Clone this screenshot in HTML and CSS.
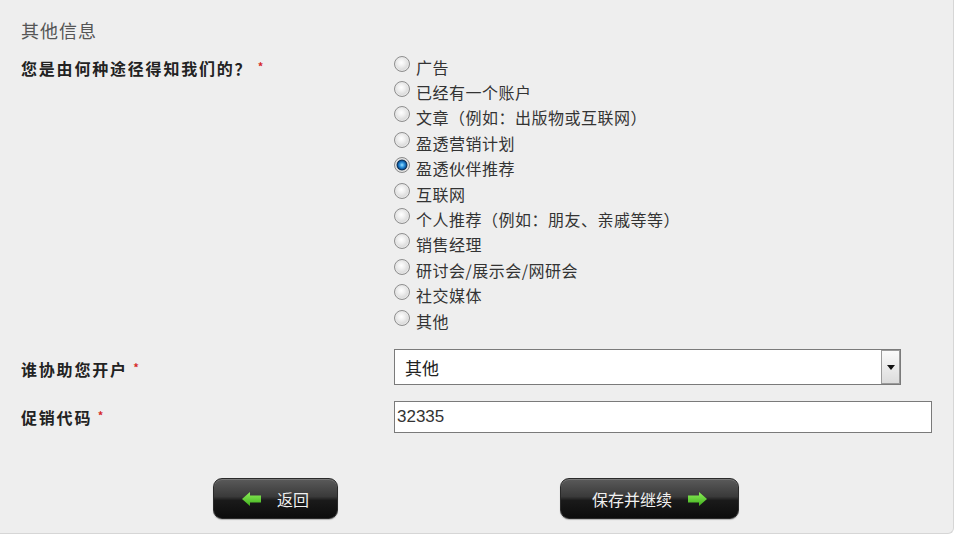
FILE: index.html
```html
<!DOCTYPE html>
<html lang="zh-CN">
<head>
    <meta charset="UTF-8">
    <meta name="viewport" content="width=device-width, initial-scale=1.0">
    <title>其他信息</title>
    <link rel="stylesheet" href="styles.css">
</head>
<body>

    <div class="panel">
        <h2 class="section-title">其他信息</h2>

        <div class="form-row">
            <div class="field-label">您是由何种途径得知我们的？ <span class="req">*</span></div>
            <div class="radio-list">
                <label class="radio"><input type="radio" name="source">广告</label>
                <label class="radio"><input type="radio" name="source">已经有一个账户</label>
                <label class="radio"><input type="radio" name="source">文章（例如：出版物或互联网）</label>
                <label class="radio"><input type="radio" name="source">盈透营销计划</label>
                <label class="radio"><input type="radio" name="source" checked>盈透伙伴推荐</label>
                <label class="radio"><input type="radio" name="source">互联网</label>
                <label class="radio"><input type="radio" name="source">个人推荐（例如：朋友、亲戚等等）</label>
                <label class="radio"><input type="radio" name="source">销售经理</label>
                <label class="radio"><input type="radio" name="source">研讨会/展示会/网研会</label>
                <label class="radio"><input type="radio" name="source">社交媒体</label>
                <label class="radio"><input type="radio" name="source">其他</label>
            </div>
        </div>

        <div class="form-row row-select">
            <div class="field-label">谁协助您开户 <span class="req">*</span></div>
            <div class="select-wrap">
                <select class="select">
                    <option>其他</option>
                </select>
                <span class="select-btn"><span class="caret"></span></span>
            </div>
        </div>

        <div class="form-row row-input">
            <div class="field-label">促销代码 <span class="req">*</span></div>
            <input class="text-input" type="text" value="32335">
        </div>

        <div class="actions">
            <button class="btn btn-back" type="button">
                <svg class="arrow" width="19" height="14" viewBox="0 0 19 14"><defs><linearGradient id="ga" x1="0" y1="0" x2="0" y2="1"><stop offset="0" stop-color="#8ef05a"/><stop offset="1" stop-color="#3fae1c"/></linearGradient></defs><polygon points="0,7 8,0 8,3.5 19,3.5 19,10.5 8,10.5 8,14" fill="url(#ga)"/></svg>
                <span>返回</span>
            </button>
            <button class="btn btn-next" type="button">
                <span>保存并继续</span>
                <svg class="arrow" width="19" height="14" viewBox="0 0 19 14"><defs><linearGradient id="gb" x1="0" y1="0" x2="0" y2="1"><stop offset="0" stop-color="#8ef05a"/><stop offset="1" stop-color="#3fae1c"/></linearGradient></defs><polygon points="19,7 11,0 11,3.5 0,3.5 0,10.5 11,10.5 11,14" fill="url(#gb)"/></svg>
            </button>
        </div>
    </div>

</body>
</html>
```

FILE: styles.css
```css
body { margin: 0; background: #fff; font-family: "Noto Sans CJK SC", "Liberation Sans", sans-serif; }
.panel { box-sizing: border-box; width: 954px; height: 534px; padding: 18px 0 0 21px; background: #eeeeee; border-right: 1px solid #d6d6d6; border-bottom: 1px solid #d6d6d6; border-bottom-right-radius: 6px; }

.section-title { margin: 0 0 12px; font-size: 18px; line-height: 24px; font-weight: normal; color: #555; letter-spacing: 1px; }

.form-row { display: grid; grid-template-columns: 373px 1fr; align-items: start; }
.field-label { font-size: 16px; font-weight: bold; color: #222; line-height: 25px; letter-spacing: 1.8px; }
.req { color: #d62a2a; font-size: 11px; vertical-align: 4px; letter-spacing: 0; }

.radio-list { display: flex; flex-direction: column; }
.radio { display: flex; align-items: center; height: 25.4px; font-size: 16px; color: #333; letter-spacing: 0.5px; }
.radio input { appearance: none; -webkit-appearance: none; box-sizing: border-box; width: 16px; height: 16px; margin: 0 6px 0 0; border-radius: 50%; border: 1px solid #8e8e8e; position: relative; top: -3px;
    background: radial-gradient(circle at 45% 40%, #ffffff 0, #f0f0f0 30%, #c4c4c4 100%); box-shadow: inset 0 0 0 1px #e8e8e8; }
.radio input:checked { border-color: #8a8a8a;
    background: radial-gradient(circle at 50% 50%, #9fe2ff 0, #3a9fe4 20%, #1265b0 38%, #0a2c50 50%, #bfbfbf 58%, #f4f4f4 100%); }

.row-select { margin-top: 16px; }
.row-select .field-label { line-height: 36px; }
.select-wrap { position: relative; width: 507px; height: 36px; }
.select { appearance: none; -webkit-appearance: none; box-sizing: border-box; width: 100%; height: 36px; margin: 0; padding: 0 0 0 10px; border: 1px solid #7a7a7a; background: #fff; font-family: "Noto Sans CJK SC", "Liberation Sans", sans-serif; font-size: 17px; color: #222; border-radius: 0; }
.select-btn { position: absolute; top: 1px; right: 1px; width: 19px; height: 34px; box-sizing: border-box; border: 1px solid #9a9a9a; background: linear-gradient(#fafafa, #dcdcdc); display: flex; align-items: center; justify-content: center; }
.caret { width: 0; height: 0; border-left: 4px solid transparent; border-right: 4px solid transparent; border-top: 5px solid #111; }

.row-input { margin-top: 14px; }
.row-input .field-label { line-height: 28px; }
.text-input { box-sizing: border-box; width: 538px; height: 32px; margin: 0; padding: 0 2px; border: 1px solid #7a7a7a; background: #fff; font-family: "Liberation Sans", sans-serif; font-size: 17px; color: #333; outline: none; }

.actions { display: flex; margin-top: 45px; padding-left: 192px; gap: 222px; }
.btn { box-sizing: border-box; height: 41px; display: flex; align-items: center; justify-content: center; gap: 16px; border: 1px solid #2a2a2a; border-radius: 9px; background: linear-gradient(#5a5a5a 0, #3a3a3a 45%, #1a1a1a 55%, #0c0c0c 100%); box-shadow: inset 0 1px 0 #777, 0 1px 1px rgba(0,0,0,0.25); color: #f0f0f0; font-family: "Noto Sans CJK SC", sans-serif; font-size: 16px; padding: 0; }
.btn-back { width: 125px; }
.btn-next { width: 179px; }
.arrow { display: block; }
```
